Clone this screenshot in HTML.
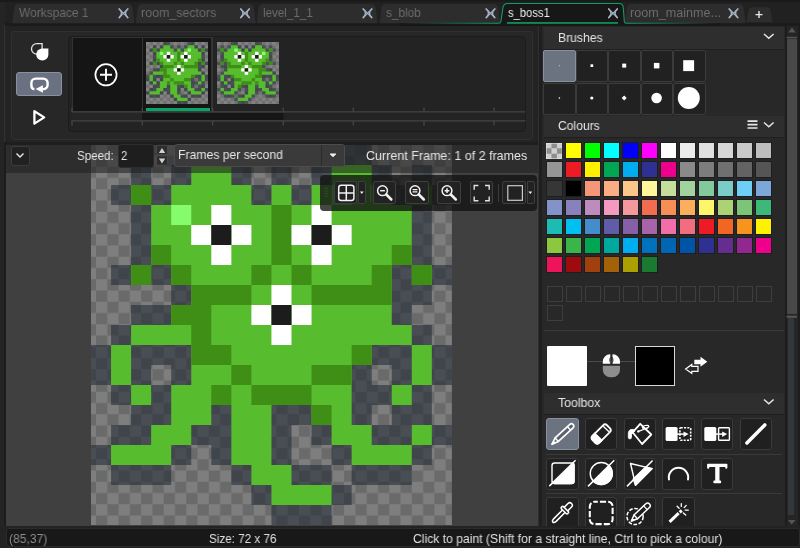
<!DOCTYPE html>
<html><head><meta charset="utf-8"><title>s_boss1</title>
<style>
html,body{margin:0;padding:0}
body{width:800px;height:548px;overflow:hidden;background:#252525;position:relative;font-family:"Liberation Sans",sans-serif;font-size:12px;color:#e4e4e4}
.a{position:absolute}
.t{position:absolute;white-space:nowrap;line-height:16px;transform-origin:0 50%;will-change:transform}
.sw{position:absolute;width:15.2px;height:15.2px;box-shadow:0 0 0 1px rgba(22,22,30,.6)}
.esw{position:absolute;width:14px;height:14px;border:1px solid #3e3e3e}
.hdr{position:absolute;left:543.5px;width:240.5px;height:21.5px;background:#2e2e2e;border-bottom:1px solid #1f1f1f}
.bc{position:absolute;width:30.6px;height:30px;border:1px solid #3b3b3b;background:#212121;border-radius:2px}
.tb{position:absolute;width:30.4px;height:30.2px;border:1px solid #3a3a3a;background:#202020;border-radius:3px}
.fb{position:absolute;top:180.8px;height:21.2px;width:21.6px;border:1px solid #3f3f3f;background:#222;border-radius:2px}
</style></head><body>

<!-- canvas area -->
<div class="a" style="left:6px;top:144px;width:532px;height:382px;background:#404040"></div>
<svg class="a" style="left:91.300px;top:145.200px" width="360.900" height="380" viewBox="0 0 360 380" preserveAspectRatio="none">
<defs><pattern id="chk" x="5" y="-0.75" width="22.5" height="22.5" patternUnits="userSpaceOnUse"><rect width="22.5" height="22.5" fill="#7e7e7e"/><rect x="11.25" width="11.25" height="11.25" fill="#6a6a6a"/><rect y="11.25" width="11.25" height="11.25" fill="#6a6a6a"/></pattern>
<pattern id="chk2" x="0" y="0" width="40" height="40" patternUnits="userSpaceOnUse"><rect width="40" height="40" fill="#838383"/><rect x="20" width="20" height="20" fill="#707070"/><rect y="20" width="20" height="20" fill="#707070"/></pattern>
<g id="spr"><path d="M100 0h40v20h-40zM240 0h40v20h-40zM40 20h20v20h-20zM80 20h80v20h-80zM180 20h20v20h-20zM220 20h80v20h-80zM320 20h20v20h-20zM20 40h340v20h-340zM40 60h300v20h-300zM40 80h300v20h-300zM40 100h300v20h-300zM20 120h340v20h-340zM80 140h260v20h-260zM40 160h280v20h-280zM20 180h320v20h-320zM0 200h360v20h-360zM0 220h60v20h-60zM80 220h200v20h-200zM300 220h60v20h-60zM20 240h320v20h-320zM40 260h240v20h-240zM300 260h40v20h-40zM20 280h180v20h-180zM220 280h140v20h-140zM0 300h100v20h-100zM120 300h80v20h-80zM240 300h100v20h-100zM20 320h60v20h-60zM140 320h100v20h-100zM260 320h60v20h-60zM160 340h100v20h-100zM180 360h60v20h-60z" fill="rgba(30,41,50,0.56)"/><path d="M100 20h40v20h-40zM240 20h40v20h-40zM40 40h20v20h-20zM80 40h80v20h-80zM180 40h20v20h-20zM220 40h80v20h-80zM320 40h20v20h-20zM60 60h260v20h-260zM60 80h260v20h-260zM60 100h260v20h-260zM40 120h20v20h-20zM80 120h220v20h-220zM320 120h20v20h-20zM100 140h200v20h-200zM80 160h220v20h-220zM40 180h280v20h-280zM20 200h20v20h-20zM100 200h180v20h-180zM320 200h20v20h-20zM20 220h20v20h-20zM100 220h160v20h-160zM320 220h20v20h-20zM40 240h20v20h-20zM80 240h180v20h-180zM300 240h20v20h-20zM80 260h40v20h-40zM140 260h40v20h-40zM220 260h40v20h-40zM60 280h40v20h-40zM140 280h40v20h-40zM240 280h40v20h-40zM320 280h20v20h-20zM20 300h60v20h-60zM140 300h40v20h-40zM260 300h60v20h-60zM160 320h40v20h-40zM180 340h60v20h-60z" fill="#57bd2f"/><path d="M40 40h20v20h-20zM320 40h20v20h-20zM180 60h20v20h-20zM180 80h20v20h-20zM60 100h20v20h-20zM180 100h20v20h-20zM300 100h20v20h-20zM40 120h20v20h-20zM80 120h20v20h-20zM160 120h20v20h-20zM200 120h20v20h-20zM280 120h20v20h-20zM320 120h20v20h-20zM100 140h60v20h-60zM220 140h80v20h-80zM80 160h40v20h-40zM100 180h20v20h-20zM100 200h40v20h-40zM260 200h20v20h-20zM140 220h20v20h-20zM220 220h40v20h-40zM120 240h20v20h-20zM160 240h60v20h-60zM220 260h20v20h-20z" fill="#3f8f17"/><path d="M240 40h20v20h-20zM80 60h20v20h-20z" fill="#84fc6c"/><path d="M120 60h20v20h-20zM220 60h20v20h-20zM100 80h20v20h-20zM140 80h20v20h-20zM200 80h20v20h-20zM240 80h20v20h-20zM120 100h20v20h-20zM220 100h20v20h-20zM180 140h20v20h-20zM160 160h20v20h-20zM200 160h20v20h-20zM180 180h20v20h-20z" fill="#ffffff"/><path d="M120 80h20v20h-20zM220 80h20v20h-20zM180 160h20v20h-20z" fill="#1c1c1c"/></g></defs>
<rect width="360" height="380" fill="url(#chk)"/>
<use href="#spr"/>
</svg>

<!-- toolbar row overlay -->
<div class="a" style="left:6px;top:144.5px;width:532px;height:28px;background:rgba(30,30,30,.56)"></div>
<div class="a" style="left:6px;top:141.500px;width:532px;height:3px;background:#1e1e1e"></div>
<div class="a" style="left:10.500px;top:145.500px;width:17.500px;height:18.500px;border:1px solid #3c3c3c;border-radius:3px;background:#212121"></div>
<svg class="a" style="left:14.800px;top:151.300px" width="10" height="8"><path d="M1.5 2.5L5 6L8.5 2.5" stroke="#e8e8e8" stroke-width="1.4" fill="none"/></svg>
<div class="t" id="t_speed" style="left:77px;top:147.63px;color:#e6e6e6;font-size:12.6px;transform:scaleX(0.9168)">Speed:</div>
<div class="a" style="left:117.5px;top:143.8px;width:34.5px;height:22px;border:1px solid #2c2c2c;border-radius:3px;background:#1e1e1e"></div>
<div class="t" id="t_two" style="left:121.2px;top:147.63px;color:#e6e6e6;font-size:12.6px;transform:scaleX(0.8980)">2</div>
<svg class="a" style="left:155.500px;top:144px" width="13" height="23" viewBox="155.500 144 13 23"><rect x="156" y="145.300" width="11" height="9.400" rx="1.500" fill="#2d2d2d" stroke="#484848"/><rect x="156" y="155.900" width="11" height="9.400" rx="1.500" fill="#2d2d2d" stroke="#484848"/><path d="M158.400 152.900L161.500 148L164.700 152.900ZM158.400 158.400L161.500 163.400L164.700 158.400Z" fill="#cdd3cf"/></svg>
<div class="a" style="left:173.500px;top:144.200px;width:169.500px;height:21px;border:1px solid #4c4c4c;border-radius:3px;background:#3a3a3a"></div>
<div class="a" style="left:321.200px;top:145.200px;width:1px;height:21px;background:#2a2a2a"></div>
<svg class="a" style="left:327px;top:151px" width="12" height="8"><path d="M3.200 3h5.600L6 5.700Z" fill="#f0f0f0" stroke="#f0f0f0" stroke-linejoin="round" stroke-width="1"/></svg>
<div class="t" id="t_fps" style="left:178.3px;top:147.43px;color:#e6e6e6;font-size:12.6px;transform:scaleX(0.9668)">Frames per second</div>
<div class="t" id="t_cur" style="left:365.8px;top:148.08px;color:#e6e6e6;font-size:12.6px;transform:scaleX(0.9934)">Current Frame: 1 of 2 frames</div>

<!-- floating toolbar -->
<div class="a" style="left:319.500px;top:174.600px;width:217.700px;height:36.200px;background:rgba(18,18,18,.78);border-radius:4px"></div>
<svg class="a" style="left:323px;top:186px" width="6" height="12"><path d="M1.500 2.500h3.500M1.500 5h3.500M1.500 7.500h3.500M1.500 10h3.500" stroke="#3c3c3c" stroke-width="1"/></svg>
<div class="fb" style="left:333.5px"></div>
<div class="fb" style="left:358px;width:6px;border-radius:0 2px 2px 0"></div>
<div class="fb" style="left:372.5px"></div>
<div class="fb" style="left:405px"></div>
<div class="fb" style="left:437px"></div>
<div class="fb" style="left:469.5px"></div>
<div class="fb" style="left:502px"></div>
<div class="fb" style="left:526.5px;width:6px;border-radius:0 2px 2px 0"></div>
<div class="a" style="left:370px;top:184px;width:1px;height:18px;background:#3a3a3a"></div>
<div class="a" style="left:498px;top:184px;width:1px;height:18px;background:#3a3a3a"></div>
<svg class="a" style="left:319.5px;top:174.5px" width="217" height="37" viewBox="319.5 174.5 217 37">
<g stroke="#f2f2f2" fill="none" stroke-width="1.5">
<rect x="338.2" y="184.8" width="15.2" height="15.2" rx="2.5"/><path d="M345.8 184.8v15.2M338.2 192.4h15.2"/>
<circle cx="382" cy="190.200" r="4.900"/><path d="M385.800 194L390.800 199" stroke-width="2.500" stroke-linecap="round"/><path d="M379.600 190.200h4.800"/>
<circle cx="414.500" cy="190.200" r="4.900"/><path d="M418.300 194L423.300 199" stroke-width="2.500" stroke-linecap="round"/><path d="M412.100 189.100h4.800M412.100 191.400h4.800" stroke-width="1.200"/>
<circle cx="446.500" cy="190.200" r="4.900"/><path d="M450.300 194L455.300 199" stroke-width="2.500" stroke-linecap="round"/><path d="M444.100 190.200h4.800M446.500 187.800v4.800"/>
<path d="M473.700 189.200v-4.200h4.200M484.500 185h4.200v4.200M488.700 196v4.200h-4.200M477.900 200.200h-4.200v-4.200" stroke-width="1.400" stroke="#e2e2e2"/>
<rect x="507.300" y="185.200" width="14.600" height="14.600" stroke-width="1.200" stroke="#cacaca"/>
</g>
<path d="M359.400 191l3.8 0l-1.9 2.6z M527.900 191l3.800 0l-1.900 2.600z" fill="#f0f0f0"/>
</svg>

<!-- top: tab bar -->
<div class="a" style="left:0;top:0;width:800px;height:25.5px;background:#212121"></div>
<div class="a" style="left:0;top:0;width:800px;height:1.6px;background:#1a1a1a"></div>
<div class="a" style="left:0;top:23.4px;width:800px;height:2.2px;background:#1b1b1b"></div>
<svg class="a" style="left:0;top:0" width="800" height="26" viewBox="0 0 800 26">
<defs><linearGradient id="tg" gradientUnits="userSpaceOnUse" x1="400" x2="720" y1="0" y2="0"><stop offset="0" stop-color="#0f9d63" stop-opacity="0"/><stop offset=".3" stop-color="#0f9d63"/><stop offset=".72" stop-color="#0f9d63"/><stop offset="1" stop-color="#0f9d63" stop-opacity="0"/></linearGradient></defs>
<path d="M12.3 23.3 L13.9 9.0 Q14.5 4.0 18.8 4.0 L127.80000000000001 4.0 Q132.10000000000002 4.0 132.70000000000002 9.0 L134.3 23.3 Z" fill="#2d2d2d"/><path d="M135.8 23.3 L137.4 9.0 Q138.0 4.0 142.3 4.0 L249.3 4.0 Q253.60000000000002 4.0 254.20000000000002 9.0 L255.8 23.3 Z" fill="#2d2d2d"/><path d="M256.8 23.3 L258.40000000000003 9.0 Q259.0 4.0 263.3 4.0 L371.1 4.0 Q375.40000000000003 4.0 376.0 9.0 L377.6 23.3 Z" fill="#2d2d2d"/><path d="M379.6 23.3 L381.20000000000005 9.0 Q381.8 4.0 386.1 4.0 L493.5 4.0 Q497.8 4.0 498.4 9.0 L500 23.3 Z" fill="#2d2d2d"/><path d="M625 23.3 L626.6 9.0 Q627.2 4.0 631.5 4.0 L739.0 4.0 Q743.3 4.0 743.9 9.0 L745.5 23.3 Z" fill="#2d2d2d"/><path d="M400 23.300L498.800 23.300Q500.600 23.300 500.900 21.500L502.900 8Q503.500 3.500 507.800 3.500L619.400 3.500Q623 3.500 623.300 8L624.300 21.500Q624.500 23.300 626.300 23.300L720 23.300L720 25.500L400 25.500Z" fill="#171717"/><path d="M400 23.300L498.800 23.300Q500.600 23.300 500.900 21.500L502.900 8Q503.500 3.500 507.800 3.500L619.400 3.500Q623 3.500 623.300 8L624.300 21.500Q624.500 23.300 626.300 23.300L720 23.300" fill="none" stroke="url(#tg)" stroke-width="1.100"/><rect x="507" y="22.200" width="111" height="1.500" fill="#12a566"/><g stroke="#a4b0c4" stroke-width="1.5" stroke-linecap="round" fill="none"><path d="M119.2 9.0 C122.3 11.8 122.3 14.8 119.2 17.6M127.8 9.0 C124.7 11.8 124.7 14.8 127.8 17.6"/><path d="M119.2 9.0L127.8 17.6M127.8 9.0L119.2 17.6" stroke-width="1.3"/></g><g stroke="#a4b0c4" stroke-width="1.5" stroke-linecap="round" fill="none"><path d="M240.7 9.0 C243.8 11.8 243.8 14.8 240.7 17.6M249.3 9.0 C246.2 11.8 246.2 14.8 249.3 17.6"/><path d="M240.7 9.0L249.3 17.6M249.3 9.0L240.7 17.6" stroke-width="1.3"/></g><g stroke="#a4b0c4" stroke-width="1.5" stroke-linecap="round" fill="none"><path d="M363.2 9.0 C366.3 11.8 366.3 14.8 363.2 17.6M371.8 9.0 C368.7 11.8 368.7 14.8 371.8 17.6"/><path d="M363.2 9.0L371.8 17.6M371.8 9.0L363.2 17.6" stroke-width="1.3"/></g><g stroke="#a4b0c4" stroke-width="1.5" stroke-linecap="round" fill="none"><path d="M486.2 9.0 C489.3 11.8 489.3 14.8 486.2 17.6M494.8 9.0 C491.7 11.8 491.7 14.8 494.8 17.6"/><path d="M486.2 9.0L494.8 17.6M494.8 9.0L486.2 17.6" stroke-width="1.3"/></g><g stroke="#a4b0c4" stroke-width="1.5" stroke-linecap="round" fill="none"><path d="M608.7 9.0 C611.8 11.8 611.8 14.8 608.7 17.6M617.3 9.0 C614.2 11.8 614.2 14.8 617.3 17.6"/><path d="M608.7 9.0L617.3 17.6M617.3 9.0L608.7 17.6" stroke-width="1.3"/></g><g stroke="#a4b0c4" stroke-width="1.5" stroke-linecap="round" fill="none"><path d="M729.2 9.0 C732.3 11.8 732.3 14.8 729.2 17.6M737.8 9.0 C734.7 11.8 734.7 14.8 737.8 17.6"/><path d="M729.2 9.0L737.8 17.6M737.8 9.0L729.2 17.6" stroke-width="1.3"/></g><path d="M746.5 22.3 L748.5 10 Q749 7.2 752 7.2 L767 7.2 Q770 7.2 770.5 10 L772.5 22.3 Z" fill="#2d2d2d"/><path d="M755.5 14.6h7M759 11.1v7" stroke="#e8e8e8" stroke-width="1.4" fill="none"/>
</svg>
<div class="t" id="t_tab1" style="left:18.8px;top:5.43px;color:#6c6c6c;font-size:12.6px;transform:scaleX(0.9486)">Workspace 1</div>
<div class="t" id="t_tab2" style="left:141px;top:5.43px;color:#6c6c6c;font-size:12.6px;transform:scaleX(0.9869)">room_sectors</div>
<div class="t" id="t_tab3" style="left:263.3px;top:5.43px;color:#6c6c6c;font-size:12.6px;transform:scaleX(0.9217)">level_1_1</div>
<div class="t" id="t_tab4" style="left:385.6px;top:5.43px;color:#6c6c6c;font-size:12.6px;transform:scaleX(0.9401)">s_blob</div>
<div class="t" id="t_tab5" style="left:507.8px;top:5.43px;color:#ececec;font-size:12.6px;transform:scaleX(0.8908)">s_boss1</div>
<div class="t" id="t_tab6" style="left:629.5px;top:5.43px;color:#6c6c6c;font-size:12.6px;transform:scaleX(1.0000)">room_mainme...</div>

<!-- left strip -->
<div class="a" style="left:0;top:1.600px;width:4.500px;height:546.400px;background:#242424"></div>
<div class="a" style="left:4.400px;top:25px;width:1px;height:117px;background:#323232"></div>
<div class="a" style="left:4.200px;top:142px;width:1.800px;height:406px;background:#1c1c1c"></div>

<!-- frames panel -->
<div class="a" style="left:6px;top:25.5px;width:532px;height:116px;background:#232323"></div>
<div class="a" style="left:11px;top:31px;width:521.800px;height:108.500px;border:1px solid #303030;border-radius:3px;background:#272727;box-sizing:border-box"></div>
<div class="a" style="left:67.5px;top:35.5px;width:458.5px;height:96.5px;border:1px solid #1c1c1c;border-radius:4px;background:#232323;box-sizing:border-box"></div>
<div class="a" style="left:71.800px;top:36.800px;width:140.200px;height:74.400px;background:#333"></div>
<div class="a" style="left:72.800px;top:37.800px;width:68.800px;height:73.400px;background:#151515"></div>
<div class="a" style="left:142.600px;top:37.800px;width:68.800px;height:73.400px;background:#151515"></div>
<div class="a" style="left:211.500px;top:37px;width:1px;height:74px;background:#363636"></div>
<div class="a" style="left:145.5px;top:108px;width:64.5px;height:2.8px;background:#0aa468"></div>
<svg class="a" style="left:94px;top:63px" width="24" height="24"><circle cx="12" cy="11.800" r="10.6" stroke="#fff" stroke-width="1.7" fill="none"/><path d="M6 11.800h12M12 5.800v12" stroke="#fff" stroke-width="1.9"/></svg>
<svg class="a" style="left:146.2px;top:41.500px;filter:blur(.4px)" width="62.3" height="62.3" viewBox="0 0 360 380" preserveAspectRatio="none"><rect width="360" height="380" fill="url(#chk2)"/><use href="#spr"/></svg>
<svg class="a" style="left:217.100px;top:41.500px;filter:blur(.4px)" width="62.3" height="62.3" viewBox="0 0 360 380" preserveAspectRatio="none"><rect width="360" height="380" fill="url(#chk2)"/><use href="#spr" transform="translate(360 0) scale(-1 1)"/></svg>
<!-- ruler -->
<svg class="a" style="left:68px;top:105px" width="460" height="24" viewBox="68 105 460 24">
<rect x="72" y="113" width="70" height="7" fill="#262626"/><rect x="142" y="113" width="141.500" height="7" fill="#161616"/>
<g stroke="#454545" stroke-width="1.300" fill="none"><path d="M71.500 111.800H525.500M71.500 120.800H525.500"/>
<path d="M72 107.500v4.300M142.300 107.500v4.300M212.600 107.500v4.300M283.300 107.500v4.300M353.300 107.500v4.300M424 107.500v4.300M494 107.500v4.300"/>
<path d="M72 120.800v4.600M142.300 120.800v4.600M212.600 120.800v4.600M283.300 120.800v4.600M353.300 120.800v4.600M424 120.800v4.600M494 120.800v4.600"/></g>
</svg>
<!-- left icons -->
<div class="a" style="left:16.200px;top:72.200px;width:46.200px;height:23.800px;background:#6a7180;border:1px solid #8a91a1;border-radius:3px;box-sizing:border-box"></div>
<svg class="a" style="left:26px;top:38px" width="30" height="92" viewBox="26 38 30 92">
<path d="M31.500 48.900A5.300 5.300 0 0 1 36.800 43.600H42.100V48.900A5.300 5.300 0 1 1 31.500 48.900Z" stroke="#e4e4e4" stroke-width="1.300" fill="none"/>
<path d="M36.200 54.500A6.100 6.100 0 0 1 42.300 48.400H48.400V54.500A6.100 6.100 0 1 1 36.200 54.500Z" fill="#fff"/>
<path d="M34.400 89.100Q31.400 89.100 31.400 85.600V82.800A4.200 4.200 0 0 1 35.600 78.600H43.400A4.200 4.200 0 0 1 47.600 82.800V84.900A4.200 4.200 0 0 1 43.400 89.100H42" stroke="#fff" stroke-width="2.400" fill="none"/><path d="M35.600 88.900L42.900 85.300V92.800Z" fill="#fff"/>
<path d="M34.400 111.200L44.200 117.400L34.400 123.600Z" stroke="#fff" stroke-width="2.300" fill="none" stroke-linejoin="round"/>
</svg>

<!-- splitter -->
<div class="a" style="left:538px;top:25.500px;width:5.500px;height:502px;background:#1f1f1f"></div>
<div class="a" style="left:537.900px;top:26px;width:1.100px;height:501px;background:#2f2f2f"></div>

<!-- right panel -->
<div class="a" style="left:542.300px;top:25.500px;width:257.700px;height:502px;background:#282828"></div>
<div class="hdr" style="top:27px"></div>
<div class="hdr" style="top:115.500px"></div>
<div class="hdr" style="top:392.500px"></div>
<div class="t" id="t_br" style="left:557.75px;top:29.73px;color:#e6e6e6;font-size:12.6px;transform:scaleX(0.9642)">Brushes</div>
<div class="t" id="t_co" style="left:557.75px;top:118.38px;color:#e6e6e6;font-size:12.6px;transform:scaleX(0.9618)">Colours</div>
<div class="t" id="t_to" style="left:557.75px;top:395.38px;color:#e6e6e6;font-size:12.6px;transform:scaleX(0.9788)">Toolbox</div>
<svg class="a" style="left:743px;top:25px" width="45" height="395" viewBox="743 25 45 395"><g stroke="#e6e6e6" stroke-width="1.500" fill="none"><path d="M764 34l4.800 4.300l4.800 -4.300M764 122.500l4.800 4.300l4.800 -4.300M764 399.500l4.800 4.300l4.800 -4.300"/><path d="M747.500 121.200h10M747.500 124.600h10M747.500 128h10" stroke-width="1.700"/></g></svg>
<!-- brushes -->
<div class="bc" style="left:543.0px;top:50px;background:#6b7280;border-color:#8990a0"></div>
<div class="bc" style="left:575.5px;top:50px"></div><div class="bc" style="left:608.0px;top:50px"></div><div class="bc" style="left:640.5px;top:50px"></div><div class="bc" style="left:673.0px;top:50px"></div>
<div class="bc" style="left:543.0px;top:82.500px"></div><div class="bc" style="left:575.5px;top:82.500px"></div><div class="bc" style="left:608.0px;top:82.500px"></div><div class="bc" style="left:640.5px;top:82.500px"></div><div class="bc" style="left:673.0px;top:82.500px"></div>
<svg class="a" style="left:543px;top:49px" width="165" height="67" viewBox="543 49 165 67"><g fill="#fff">
<rect x="558.900" y="65.200" width="1" height="1" fill="#c8ccd4"/><rect x="590.500" y="64.300" width="2.700" height="2.700"/><rect x="622.200" y="63.600" width="4" height="4"/><rect x="653.900" y="62.900" width="5.500" height="5.500"/><rect x="683.200" y="60.200" width="10.900" height="10.900"/>
<circle cx="559.400" cy="98" r=".8"/><circle cx="591.800" cy="98" r="1.600"/><path d="M624.200 95.500l2.500 2.500l-2.500 2.500l-2.500 -2.500z"/><circle cx="656.600" cy="98" r="5.300"/><circle cx="688.800" cy="98" r="11"/></g></svg>
<svg class="a" style="left:546.0px;top:142.6px" width="16.4" height="16" viewBox="0 0 16 16" preserveAspectRatio="none"><rect width="16" height="16" fill="#cfcfcf"/><path d="M5.330 0h5.340v5.330h-5.340zM0 5.330h5.330v5.340h-5.330zM10.670 5.330h5.330v5.340h-5.330zM5.330 10.670h5.340v5.330h-5.340z" fill="#8e8e8e"/><rect x=".3" y=".3" width="15.400" height="15.400" fill="none" stroke="#e4e4e4" stroke-width=".6"/></svg>
<div class="sw" style="left:565.8px;top:143.0px;background:#ffff00"></div>
<div class="sw" style="left:584.8px;top:143.0px;background:#00ff00"></div>
<div class="sw" style="left:603.8px;top:143.0px;background:#00ffff"></div>
<div class="sw" style="left:622.8px;top:143.0px;background:#0000ff"></div>
<div class="sw" style="left:641.8px;top:143.0px;background:#ff00ff"></div>
<div class="sw" style="left:660.8px;top:143.0px;background:#ffffff"></div>
<div class="sw" style="left:679.8px;top:143.0px;background:#ececec"></div>
<div class="sw" style="left:698.8px;top:143.0px;background:#e0e0e0"></div>
<div class="sw" style="left:717.8px;top:143.0px;background:#d6d6d6"></div>
<div class="sw" style="left:736.8px;top:143.0px;background:#cacaca"></div>
<div class="sw" style="left:755.8px;top:143.0px;background:#bdbdbd"></div>
<div class="sw" style="left:546.8px;top:162.0px;background:#969696"></div>
<div class="sw" style="left:565.8px;top:162.0px;background:#ed1c24"></div>
<div class="sw" style="left:584.8px;top:162.0px;background:#fff200"></div>
<div class="sw" style="left:603.8px;top:162.0px;background:#00a651"></div>
<div class="sw" style="left:622.8px;top:162.0px;background:#00aeef"></div>
<div class="sw" style="left:641.8px;top:162.0px;background:#2e3192"></div>
<div class="sw" style="left:660.8px;top:162.0px;background:#ec008c"></div>
<div class="sw" style="left:679.8px;top:162.0px;background:#8a8a8a"></div>
<div class="sw" style="left:698.8px;top:162.0px;background:#7d7d7d"></div>
<div class="sw" style="left:717.8px;top:162.0px;background:#707070"></div>
<div class="sw" style="left:736.8px;top:162.0px;background:#636363"></div>
<div class="sw" style="left:755.8px;top:162.0px;background:#555555"></div>
<div class="sw" style="left:546.8px;top:181.0px;background:#363636"></div>
<div class="sw" style="left:565.8px;top:181.0px;background:#000000"></div>
<div class="sw" style="left:584.8px;top:181.0px;background:#f69679"></div>
<div class="sw" style="left:603.8px;top:181.0px;background:#f9ad81"></div>
<div class="sw" style="left:622.8px;top:181.0px;background:#fdc689"></div>
<div class="sw" style="left:641.8px;top:181.0px;background:#fff799"></div>
<div class="sw" style="left:660.8px;top:181.0px;background:#c4df9b"></div>
<div class="sw" style="left:679.8px;top:181.0px;background:#a3d39c"></div>
<div class="sw" style="left:698.8px;top:181.0px;background:#82ca9c"></div>
<div class="sw" style="left:717.8px;top:181.0px;background:#7accc8"></div>
<div class="sw" style="left:736.8px;top:181.0px;background:#6dcff6"></div>
<div class="sw" style="left:755.8px;top:181.0px;background:#7da7d9"></div>
<div class="sw" style="left:546.8px;top:200.0px;background:#8393ca"></div>
<div class="sw" style="left:565.8px;top:200.0px;background:#8781bd"></div>
<div class="sw" style="left:584.8px;top:200.0px;background:#bd8cbf"></div>
<div class="sw" style="left:603.8px;top:200.0px;background:#f49ac1"></div>
<div class="sw" style="left:622.8px;top:200.0px;background:#f5989d"></div>
<div class="sw" style="left:641.8px;top:200.0px;background:#f26c4f"></div>
<div class="sw" style="left:660.8px;top:200.0px;background:#f68e56"></div>
<div class="sw" style="left:679.8px;top:200.0px;background:#fbaf5d"></div>
<div class="sw" style="left:698.8px;top:200.0px;background:#fff568"></div>
<div class="sw" style="left:717.8px;top:200.0px;background:#acd373"></div>
<div class="sw" style="left:736.8px;top:200.0px;background:#7cc576"></div>
<div class="sw" style="left:755.8px;top:200.0px;background:#3cb878"></div>
<div class="sw" style="left:546.8px;top:219.0px;background:#1cbbb4"></div>
<div class="sw" style="left:565.8px;top:219.0px;background:#00bff3"></div>
<div class="sw" style="left:584.8px;top:219.0px;background:#448ccb"></div>
<div class="sw" style="left:603.8px;top:219.0px;background:#605ca8"></div>
<div class="sw" style="left:622.8px;top:219.0px;background:#855fa8"></div>
<div class="sw" style="left:641.8px;top:219.0px;background:#a864a8"></div>
<div class="sw" style="left:660.8px;top:219.0px;background:#f06eaa"></div>
<div class="sw" style="left:679.8px;top:219.0px;background:#f26d7d"></div>
<div class="sw" style="left:698.8px;top:219.0px;background:#ed1c24"></div>
<div class="sw" style="left:717.8px;top:219.0px;background:#f26522"></div>
<div class="sw" style="left:736.8px;top:219.0px;background:#f7941d"></div>
<div class="sw" style="left:755.8px;top:219.0px;background:#fff200"></div>
<div class="sw" style="left:546.8px;top:238.0px;background:#8dc63f"></div>
<div class="sw" style="left:565.8px;top:238.0px;background:#39b54a"></div>
<div class="sw" style="left:584.8px;top:238.0px;background:#00a651"></div>
<div class="sw" style="left:603.8px;top:238.0px;background:#00a99d"></div>
<div class="sw" style="left:622.8px;top:238.0px;background:#00aeef"></div>
<div class="sw" style="left:641.8px;top:238.0px;background:#0072bc"></div>
<div class="sw" style="left:660.8px;top:238.0px;background:#0066b3"></div>
<div class="sw" style="left:679.8px;top:238.0px;background:#0054a6"></div>
<div class="sw" style="left:698.8px;top:238.0px;background:#2e3192"></div>
<div class="sw" style="left:717.8px;top:238.0px;background:#662d91"></div>
<div class="sw" style="left:736.8px;top:238.0px;background:#92278f"></div>
<div class="sw" style="left:755.8px;top:238.0px;background:#ec008c"></div>
<div class="sw" style="left:546.8px;top:257.0px;background:#ed145b"></div>
<div class="sw" style="left:565.8px;top:257.0px;background:#9e0b0f"></div>
<div class="sw" style="left:584.8px;top:257.0px;background:#a0410d"></div>
<div class="sw" style="left:603.8px;top:257.0px;background:#a36209"></div>
<div class="sw" style="left:622.8px;top:257.0px;background:#aba000"></div>
<div class="sw" style="left:641.8px;top:257.0px;background:#197b30"></div>
<div class="esw" style="left:546.5px;top:285.500px"></div>
<div class="esw" style="left:565.5px;top:285.500px"></div>
<div class="esw" style="left:584.5px;top:285.500px"></div>
<div class="esw" style="left:603.5px;top:285.500px"></div>
<div class="esw" style="left:622.5px;top:285.500px"></div>
<div class="esw" style="left:641.5px;top:285.500px"></div>
<div class="esw" style="left:660.5px;top:285.500px"></div>
<div class="esw" style="left:679.5px;top:285.500px"></div>
<div class="esw" style="left:698.5px;top:285.500px"></div>
<div class="esw" style="left:717.5px;top:285.500px"></div>
<div class="esw" style="left:736.5px;top:285.500px"></div>
<div class="esw" style="left:755.5px;top:285.500px"></div>
<div class="esw" style="left:546.500px;top:304.500px"></div>
<div class="a" style="left:543.500px;top:330px;width:240.500px;height:1px;background:#3a3a3a"></div>
<div class="a" style="left:587px;top:361px;width:48px;height:1px;background:#4a4a4a"></div>
<div class="a" style="left:547px;top:345.600px;width:40.200px;height:40.300px;background:#fff;border-radius:1px"></div>
<div class="a" style="left:635.200px;top:345.700px;width:37.600px;height:38.300px;background:#000;border:1px solid #d8d8d8"></div>
<svg class="a" style="left:600px;top:350px" width="112" height="30" viewBox="600 350 112 30">
<path d="M602.800 363.800V361.500A7.200 7.200 0 0 1 610 354.300H610.300V363.800ZM620 363.800V361.500A7.200 7.200 0 0 0 612.800 354.300H612.500V363.800Z" fill="#fff"/>
<path d="M610.300 357.500Q609.300 360 610.300 362.500M612.500 357.500Q613.500 360 612.500 362.500" stroke="#282828" stroke-width="1" fill="none"/>
<path d="M602.800 365.700H620V369.800A7.500 7.500 0 0 1 612.500 377.300H610.300A7.500 7.500 0 0 1 602.800 369.800Z" fill="#8e8e8e"/>
<path d="M694.300 359.700H700.500V356.700L707.300 361.800L700.500 366.800V364.200H694.300Z" fill="#fff"/>
<path d="M698 366.400H691.800V364.400L685.600 368.900L691.800 373.400V371.400H698Z" fill="#282828" stroke="#fff" stroke-width="1.200" stroke-linejoin="miter"/>
</svg>
<!-- toolbox -->
<div class="tb" style="left:546.3px;top:418.200px;background:#6b7280;border-color:#8990a0"></div>
<div class="tb" style="left:585.0px;top:418.200px"></div><div class="tb" style="left:623.7px;top:418.200px"></div><div class="tb" style="left:662.4px;top:418.200px"></div><div class="tb" style="left:701.1px;top:418.200px"></div><div class="tb" style="left:739.8px;top:418.200px"></div>
<div class="tb" style="left:546.3px;top:457.500px"></div><div class="tb" style="left:585.0px;top:457.500px"></div><div class="tb" style="left:623.7px;top:457.500px"></div><div class="tb" style="left:662.4px;top:457.500px"></div><div class="tb" style="left:701.1px;top:457.500px"></div>
<div class="tb" style="left:546.3px;top:497px"></div><div class="tb" style="left:585.0px;top:497px"></div><div class="tb" style="left:623.7px;top:497px"></div><div class="tb" style="left:662.4px;top:497px"></div>
<div class="a" style="left:546px;top:453.500px;width:236px;height:1px;background:#3a3a3a"></div>
<div class="a" style="left:546px;top:493px;width:236px;height:1px;background:#3a3a3a"></div>
<svg class="a" style="left:543px;top:415px" width="240" height="113" viewBox="543 415 240 113"><g transform="translate(552.00 444.10) rotate(-42.61)" stroke="#fff" stroke-width="1.7" fill="none" stroke-linejoin="round" stroke-linecap="round"><path d="M0 0L6.5 -2.35L26.45 -2.35A2.35 2.35 0 0 1 26.45 2.35L6.5 2.35Z" fill="rgba(0,0,0,.14)"/><path d="M6.5 -2.35V2.35M23.20 -2.35V2.35" stroke-width="1.44"/><path d="M0 0L3.2 -1.16V1.16Z" fill="#fff" stroke-width="0.8"/></g><g transform="translate(601.2 434) rotate(-45.5)" stroke="#fff" stroke-width="1.8" fill="none"><rect x="-10.3" y="-4.8" width="20.6" height="9.6" rx="2.8"/><path d="M-4.2 -4.8V4.8H-7.5A2.8 2.8 0 0 1 -10.3 2V-2A2.8 2.8 0 0 1 -7.500 -4.800Z" fill="#fff"/><path d="M7 -4V4" stroke-width="1.300"/></g><g stroke="#fff" fill="none" stroke-linejoin="round" stroke-linecap="round"><path d="M640.2 423.8L651.3 434.5L642.1 444L632.6 432.3Z" stroke-width="1.8"/><ellipse cx="645.6" cy="426.9" rx="3.3" ry="1.4" transform="rotate(-12 645.6 426.9)" stroke-width="1.2"/><path d="M638.4 431.4L647.6 428" stroke-width="1.2"/><circle cx="638.3" cy="431.4" r="1.2" fill="#fff" stroke="none"/><path d="M633.6 429.6C630.5 428.6 628.3 430.6 628.3 433.4V437.3A1.6 1.6 0 0 0 631.5 437.3V434.6L634.6 431.3Z" fill="#fff" stroke-width="0.8"/></g><rect x="665.6" y="427" width="12" height="14" rx="1.6" fill="#fff"/><rect x="679.9" y="427.8" width="10.8" height="12.4" fill="none" stroke="#fff" stroke-width="1.6" stroke-dasharray="2.1 1.2" rx=".8"/><path d="M677 434.1H684" stroke="#fff" stroke-width="1.5"/><path d="M683.5 431.5L688.6 434.1L683.5 436.9Z" fill="#fff"/><rect x="704.3" y="427" width="12" height="14" rx="1.6" fill="#fff"/><rect x="718.6" y="427.8" width="10.8" height="12.4" fill="none" stroke="#fff" stroke-width="1.4" rx=".8"/><path d="M716 434.1H722.600" stroke="#fff" stroke-width="1.5"/><path d="M722.100 431.500L727.200 434.100L722.100 436.900Z" fill="#fff"/><path d="M746.9 442.900L764.800 424.900" stroke="#fff" stroke-width="3.5" stroke-linecap="round"/><clipPath id="c7"><path d="M549.300 486.150L575.600 460.300L580 460V490H549Z"/></clipPath><rect x="552" y="463" width="22" height="20.500" rx="2.600" fill="none" stroke="#fff" stroke-width="1.400"/><rect x="551.300" y="462.300" width="23.400" height="21.900" rx="3" fill="#fff" clip-path="url(#c7)"/><path d="M549.300 486.150L575.600 460.300" stroke="#fff" stroke-width="1.500"/><clipPath id="c8"><path d="M588 486.400L614.300 460.300L620 460V490H588Z"/></clipPath><circle cx="601.250" cy="473.550" r="11" fill="none" stroke="#fff" stroke-width="1.400"/><circle cx="601.250" cy="473.550" r="11.700" fill="#fff" clip-path="url(#c8)"/><path d="M588 486.400L614.300 460.300" stroke="#fff" stroke-width="1.500"/><path d="M630.500 463.500L652 468.600L635.600 485Z" fill="none" stroke="#fff" stroke-width="1.400" stroke-linejoin="round"/><path d="M645.800 467.100L652.150 468.600L635.500 485.250L633.300 478.900Z" fill="#fff" stroke="#fff" stroke-width="1.400" stroke-linejoin="round"/><path d="M626.950 486.400L652.600 460.500" stroke="#fff" stroke-width="1.500"/><path d="M669 479.500A9.700 9.700 0 1 1 688 479.500" fill="none" stroke="#fff" stroke-width="2" stroke-linecap="round"/><path d="M707.900 463.700H726.600Q727.400 463.700 727.400 464.500V467.800Q727.400 468.700 726.300 468.700Q725.200 468.700 725.200 467.800V466.900H719.500V480.500H720.200Q721.200 480.500 721.200 481.900Q721.200 483.300 720.200 483.300H714.300Q713.300 483.300 713.300 481.900Q713.300 480.500 714.300 480.500H715.200V466.900H709.300V467.800Q709.300 468.700 708.200 468.700Q707.100 468.700 707.100 467.800V464.500Q707.100 463.700 707.900 463.700Z" fill="#fff"/><g transform="translate(552.650 522.350) rotate(-45)" stroke="#fff" stroke-width="1.500" fill="none" stroke-linejoin="round"><path d="M16 -1.800H3.500Q0.300 -1.600 0.300 0Q0.300 1.600 3.500 1.800H16"/><rect x="15.800" y="-4.500" width="2.900" height="9" rx="1.300"/><path d="M18.700 -2.500H24.200A2.500 2.500 0 0 1 24.200 2.500H18.700"/></g><rect x="589.800" y="501.700" width="22.800" height="22.400" rx="4.800" fill="none" stroke="#fff" stroke-width="2.050" stroke-dasharray="6.200 2.100" stroke-dashoffset="3"/><circle cx="635.050" cy="516.500" r="8.100" fill="none" stroke="#fff" stroke-width="1.500" stroke-dasharray="3.700 1.600"/><g transform="translate(631.40 521.00) rotate(-43.37)" stroke="#fff" stroke-width="1.5" fill="none" stroke-linejoin="round" stroke-linecap="round"><path d="M0 0L6 -2.6L22.30 -2.6A2.6 2.6 0 0 1 22.30 2.6L6 2.6Z" fill="#202020"/><path d="M6 -2.6V2.6M19.30 -2.6V2.6" stroke-width="1.27"/><path d="M0 0L2.5 -1.08V1.08Z" fill="#fff" stroke-width="0.8"/></g><path d="M669.600 521.800L678.700 513.200" stroke="#fff" stroke-width="3" /><path d="M679.700 512.300L681.700 510.400" stroke="#fff" stroke-width="3"/><g stroke="#fff" stroke-width="1.300" stroke-linecap="round"><path d="M681.300 503.600V506.400M677.100 506.300L679.100 508.300M686.200 505.400L684.200 507.600M685.200 510.200H688.300M683.300 513L685.700 515.100"/></g></svg>

<!-- scrollbar -->
<div class="a" style="left:785px;top:25.500px;width:15px;height:501px;background:#1d1d1d"></div>
<div class="a" style="left:786.500px;top:26px;width:11px;height:500.300px;background:#252525"></div>
<div class="a" style="left:788px;top:318px;width:6.300px;height:197px;background:#33373d"></div>
<div class="a" style="left:786.600px;top:39.200px;width:10.400px;height:274.700px;background:#484848;border-radius:1px"></div>
<svg class="a" style="left:786px;top:26px" width="14" height="502" viewBox="786 26 14 502"><path d="M788.300 32.400l3.700 -4.800l3.700 4.800z M787.900 519.900l3.850 4.700l3.850 -4.700z" fill="#555"/><rect x="786.600" y="36.800" width="10.400" height="1.500" fill="#555"/><rect x="786.600" y="315.600" width="10.400" height="2.200" fill="#555"/></svg>

<!-- status bar -->
<div class="a" style="left:0;top:526.300px;width:800px;height:21.700px;background:#232323"></div>
<div class="a" style="left:5.500px;top:528.300px;width:792.500px;height:17px;background:#181818;border:1px solid #2b2b2b;border-radius:3px"></div>
<div class="t" id="t_pos" style="left:8.75px;top:530.63px;color:#8c8c8c;font-size:12.6px;transform:scaleX(0.9585)">(85,37)</div>
<div class="t" id="t_size" style="left:208.75px;top:530.53px;color:#e0e0e0;font-size:12.6px;transform:scaleX(0.9270)">Size: 72 x 76</div>
<div class="t" id="t_hint" style="left:413px;top:530.63px;color:#e0e0e0;font-size:12.6px;transform:scaleX(0.9654)">Click to paint (Shift for a straight line, Ctrl to pick a colour)</div>
</body></html>
